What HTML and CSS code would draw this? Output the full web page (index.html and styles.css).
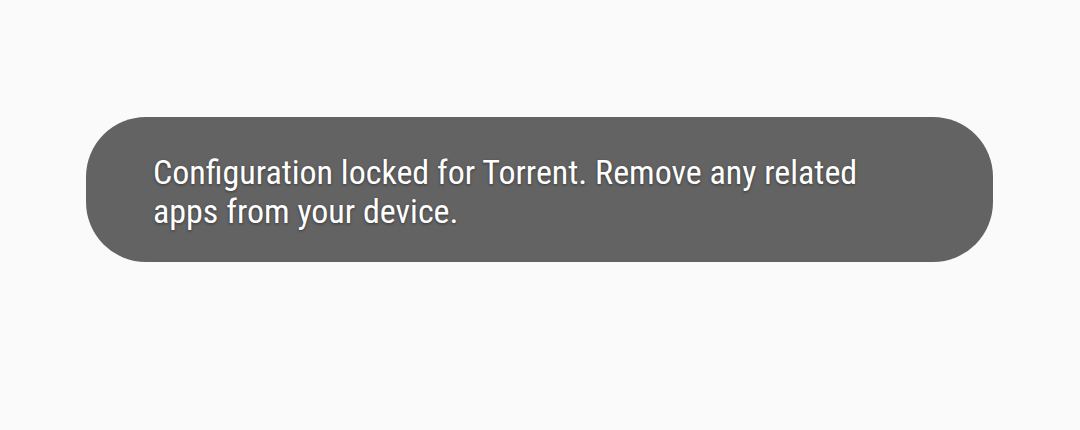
FILE: index.html
```html
<!DOCTYPE html>
<html>
<head>
<meta charset="utf-8">
<link rel="stylesheet" href="styles.css">
</head>
<body>
<div class="screen">
  <div class="toast">
    <p class="toast-text">Configuration locked for Torrent. Remove any related apps from your device.</p>
  </div>
</div>
</body>
</html>
```

FILE: styles.css
```css
html, body {
  margin: 0;
  padding: 0;
  background: #fafafa;
}
.screen {
  width: 1080px;
  height: 430px;
  padding: 117px 0 0 86px;
  box-sizing: border-box;
}
.toast {
  width: 907px;
  height: 145px;
  box-sizing: border-box;
  border-radius: 60px;
  background: #636363;
  padding: 36px 100px 0 67px;
}
.toast-text {
  margin: 0;
  font-family: Roboto, "Liberation Sans", sans-serif;
  font-stretch: 75%;
  font-size: 34px;
  line-height: 39px;
  color: #ffffff;
  text-shadow: 0 1px 3px rgba(0,0,0,0.45);
}
```
